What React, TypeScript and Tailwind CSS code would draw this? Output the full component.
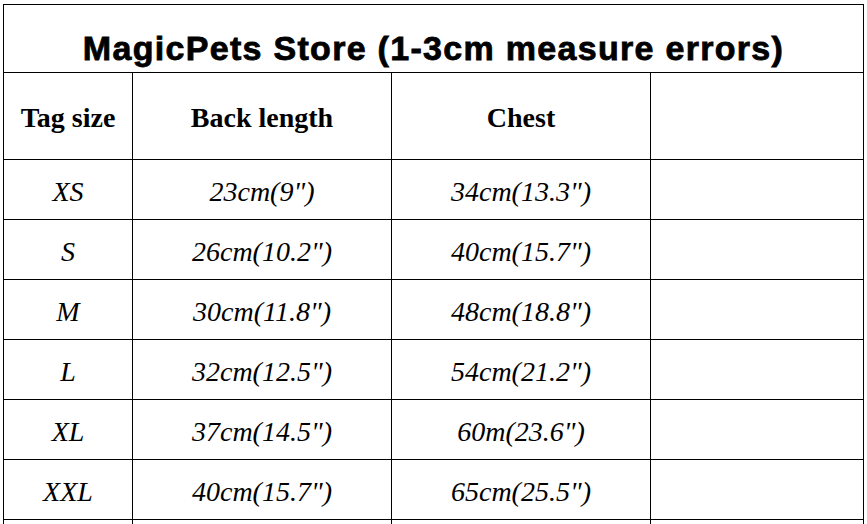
import React from 'react';

interface SizeRow {
  tag: string;
  back: string;
  chest: string;
}

const sizes: SizeRow[] = [
  { tag: 'XS', back: '23cm(9")', chest: '34cm(13.3")' },
  { tag: 'S', back: '26cm(10.2")', chest: '40cm(15.7")' },
  { tag: 'M', back: '30cm(11.8")', chest: '48cm(18.8")' },
  { tag: 'L', back: '32cm(12.5")', chest: '54cm(21.2")' },
  { tag: 'XL', back: '37cm(14.5")', chest: '60m(23.6")' },
  { tag: 'XXL', back: '40cm(15.7")', chest: '65cm(25.5")' },
];

const cell = 'border border-black text-center align-middle p-0';

const SizeChart: React.FC = () => {
  return (
    <div className="w-[867px] h-[524px] overflow-hidden bg-white pl-[3px] pt-[4px] font-['Liberation_Serif',serif] text-black">
      <table className="table-fixed border-collapse w-[860px]">
        <colgroup>
          <col className="w-[129px]" />
          <col className="w-[259px]" />
          <col className="w-[259px]" />
          <col className="w-[213px]" />
        </colgroup>
        <tbody>
          {/* Title */}
          <tr className="h-[68px]">
            <td
              colSpan={4}
              className="border border-black text-center align-bottom pb-[7px] font-['Liberation_Sans',Arial,sans-serif] font-bold text-[34px] leading-none tracking-[1.3px] [-webkit-text-stroke:0.8px_black]"
            >
              MagicPets Store (1-3cm measure errors)
            </td>
          </tr>

          {/* Column headers */}
          <tr className="h-[87px]">
            <td className={`${cell} pt-[4px] font-bold text-[28px]`}>Tag size</td>
            <td className={`${cell} pt-[4px] font-bold text-[28px]`}>Back length</td>
            <td className={`${cell} pt-[4px] font-bold text-[28px]`}>Chest</td>
            <td className={cell}></td>
          </tr>

          {sizes.map((row) => (
            <tr key={row.tag} className="h-[60px]">
              <td className={`${cell} pt-[5px] italic text-[28px]`}>{row.tag}</td>
              <td className={`${cell} pt-[5px] italic text-[28px]`}>{row.back}</td>
              <td className={`${cell} pt-[5px] italic text-[28px]`}>{row.chest}</td>
              <td className={cell}></td>
            </tr>
          ))}

          {/* next (cut off) row */}
          <tr className="h-[60px]">
            <td className={cell}></td>
            <td className={cell}></td>
            <td className={cell}></td>
            <td className={cell}></td>
          </tr>
        </tbody>
      </table>
    </div>
  );
};

export default function App() {
  return <SizeChart />;
}
